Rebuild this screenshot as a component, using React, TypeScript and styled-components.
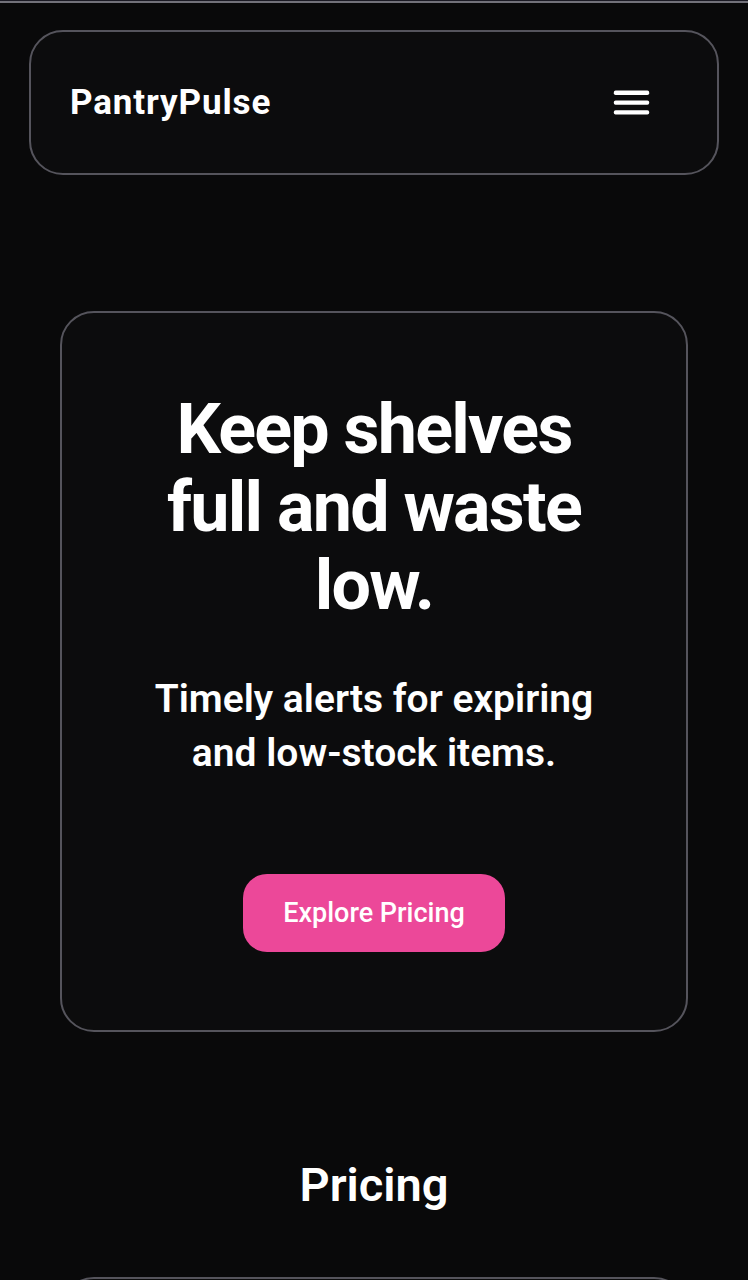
import React from "react";
import styled, { createGlobalStyle } from "styled-components";

const Global = createGlobalStyle`
  *, *::before, *::after { box-sizing: border-box; }
  body {
    margin: 0;
    background: #09090a;
    color: #fff;
    font-family: Roboto, "Liberation Sans", sans-serif;
  }
`;

const Page = styled.div`
  height: 100vh;
  overflow-y: auto;
  scrollbar-width: none;
  border-top: 1px solid #1b1a24;
`;

const TopRule = styled.div`
  height: 2px;
  background: #72717a;
`;

const Panel = styled.section`
  background: #0c0c0d;
  border: 2px solid #55545c;
  border-radius: 34px;
`;

const Header = styled(Panel).attrs({ as: "header" })`
  display: flex;
  align-items: center;
  justify-content: space-between;
  margin: 27px 29px 0;
  padding: 47px 67px 46px 39px;
`;

const Brand = styled.a`
  color: inherit;
  text-decoration: none;
  font-size: 35px;
  line-height: 48px;
  font-weight: 700;
  letter-spacing: 0.025em;
`;

const MenuButton = styled.button`
  display: flex;
  padding: 0;
  border: 0;
  background: none;
  color: inherit;
`;

const Hero = styled(Panel)`
  display: flex;
  flex-direction: column;
  align-items: center;
  margin: 136px 60px 0;
  padding: 77px 78px 78px;
  text-align: center;
`;

const Title = styled.h1`
  margin: 0;
  font-size: 70px;
  line-height: 78px;
  font-weight: 700;
  letter-spacing: -0.025em;
`;

const Lead = styled.p`
  margin: 48px 0 94px;
  font-size: 39px;
  line-height: 54px;
  font-weight: 600;
`;

const Cta = styled.button`
  height: 78px;
  padding: 0 40px;
  border: 0;
  border-radius: 24px;
  background: #ec4899;
  color: #fff;
  font-family: inherit;
  font-size: 27px;
  line-height: 40px;
  font-weight: 500;
`;

const Pricing = styled.section`
  margin: 125px 60px 0;
`;

const Heading = styled.h2`
  margin: 0 0 64px;
  text-align: center;
  font-size: 47px;
  line-height: 56px;
  font-weight: 600;
`;

const PlanCard = styled(Panel).attrs({ as: "article" })`
  min-height: 400px;
`;

export default function App() {
  return (
    <Page>
      <Global />
      <TopRule />
      <Header>
        <Brand href="#">PantryPulse</Brand>
        <MenuButton type="button" aria-label="Open menu">
          <svg width="40" height="40" viewBox="0 0 40 40" fill="currentColor">
            <rect x="3.8" y="7.6" width="35.4" height="4.4" rx="1.8" />
            <rect x="3.8" y="17.4" width="35.4" height="4.4" rx="1.8" />
            <rect x="3.8" y="27.2" width="35.4" height="4.4" rx="1.8" />
          </svg>
        </MenuButton>
      </Header>
      <main>
        <Hero>
          <Title>Keep shelves full and waste low.</Title>
          <Lead>Timely alerts for expiring and low-stock items.</Lead>
          <Cta type="button">Explore Pricing</Cta>
        </Hero>
        <Pricing>
          <Heading>Pricing</Heading>
          <PlanCard />
        </Pricing>
      </main>
    </Page>
  );
}
